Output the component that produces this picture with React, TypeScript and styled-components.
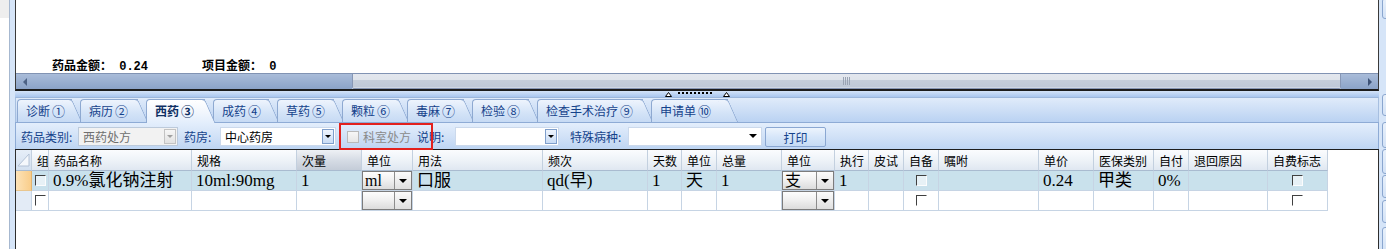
import React from "react";
import styled, { createGlobalStyle } from "styled-components";

const GlobalStyle = createGlobalStyle`
  html, body { margin: 0; padding: 0; background: #ffffff; }
  body {
    font-family: "Noto Sans CJK SC", "Liberation Sans", sans-serif;
    font-size: 12px;
    color: #000;
  }
  *, *::before, *::after { box-sizing: border-box; }
`;

const Page = styled.div`
  display: flex;
  width: 1386px;
  height: 249px;
  overflow: hidden;
`;

const Gutter = styled.div`
  flex: none;
  width: 10px;
  border-right: 1px solid #a6b8d0;
  background: #fff;
`;

const GutterBlock = styled.div`
  height: 18px;
  background: #eeeeee;
`;

const Frame = styled.div`
  flex: 1;
  min-width: 0;
  display: flex;
  background: #d6e5f8;
  padding-left: 5px;
`;

const Main = styled.div`
  flex: none;
  width: 1364px;
  display: flex;
  flex-direction: column;
`;

const SideBar = styled.div`
  flex: 1;
  overflow: hidden;
  padding-left: 3px;
  display: flex;
  flex-direction: column;
`;

const SideButton = styled.div<{ $h: number; $mt: number }>`
  flex: none;
  width: 14px;
  height: ${(p) => p.$h}px;
  margin-top: ${(p) => p.$mt}px;
  border: 1px solid #8aa6cf;
  border-radius: 3px;
  background: linear-gradient(#e9f1fb, #d3e2f6);
`;

/* ---------- top panel ---------- */

const TopPanel = styled.div`
  flex: none;
  height: 91px;
  display: flex;
  flex-direction: column;
  border-left: 1px solid #3a3a3a;
  border-right: 1px solid #3a3a3a;
  border-bottom: 2px solid #1c1c1c;
`;

const Summary = styled.div`
  flex: 1;
  background: #fff;
  display: flex;
  align-items: flex-end;
  padding-left: 36px;
  font-family: "Liberation Mono", "Noto Sans CJK SC", monospace;
  font-weight: 700;
  font-size: 12px;
  line-height: 12px;
`;

const SumItem = styled.div<{ $w?: number }>`
  width: ${(p) => (p.$w ? `${p.$w}px` : "auto")};
  white-space: pre;
`;

const HScroll = styled.div`
  flex: none;
  height: 16px;
  display: flex;
  border-top: 1px solid #8193b3;
`;

const ScrollTrack = styled.div<{ $w: number; $end?: boolean }>`
  flex: none;
  width: ${(p) => p.$w}px;
  display: flex;
  align-items: center;
  justify-content: ${(p) => (p.$end ? "flex-end" : "flex-start")};
  padding: 0 6px 0 7px;
  background: linear-gradient(#a9bcd9, #8ba3c8);
`;

const Arrow = styled.span<{ $dir: "left" | "right" }>`
  width: 0;
  height: 0;
  border-top: 4px solid transparent;
  border-bottom: 4px solid transparent;
  ${(p) =>
    p.$dir === "left"
      ? "border-right: 4px solid #4d6285;"
      : "border-left: 4px solid #3d5276;"}
`;

const Thumb = styled.div<{ $w: number }>`
  flex: none;
  width: ${(p) => p.$w}px;
  display: flex;
  align-items: center;
  justify-content: center;
  border: 1px solid #8797b5;
  border-top: none;
  border-radius: 0 0 2px 2px;
  background: linear-gradient(#e3e7ee 0%, #dfe4eb 42%, #c5cedb 46%, #bfc9d8 92%, #dde3ec 100%);
`;

const Grip = styled.span`
  width: 8px;
  height: 8px;
  background: repeating-linear-gradient(90deg, #9aa4b4 0 1px, transparent 1px 2px);
`;

const Splitter = styled.div`
  flex: none;
  height: 6px;
  padding-left: 650px;
  background: linear-gradient(#d3e3f8, #a9c6ee);
  svg { display: block; }
`;

/* ---------- tabs ---------- */

const TabPanel = styled.div`
  flex: 1;
  display: flex;
  flex-direction: column;
  min-height: 0;
`;

const TabStrip = styled.div`
  position: relative;
  z-index: 2;
  flex: none;
  height: 25px;
  display: flex;
  align-items: flex-end;
  padding-left: 1px;
  border-top: 1px solid #9cb7dc;
  border-left: 1px solid #a7bfe0;
  border-right: 1px solid #a7bfe0;
  background: linear-gradient(#e0ebfa, #bad2f2);
`;

const Tab = styled.div<{ $w: number; $active?: boolean }>`
  position: relative;
  z-index: ${(p) => (p.$active ? 3 : 1)};
  flex: none;
  width: ${(p) => p.$w}px;
  height: ${(p) => (p.$active ? 24 : 23)}px;
  margin-right: 8px;
  margin-bottom: ${(p) => (p.$active ? -1 : 0)}px;
  display: flex;
  align-items: center;
  padding: 0 0 ${(p) => (p.$active ? 3 : 2)}px 8px;
  border-top: 1px solid #8ea9d1;
  border-left: 1px solid #8ea9d1;
  border-top-left-radius: 4px;
  background: ${(p) =>
    p.$active
      ? "linear-gradient(#ffffff, #f1f6fd 55%, #e3eefc)"
      : "linear-gradient(#eef4fd, #d3e3f7 60%, #c6daf4)"};
  color: ${(p) => (p.$active ? "#0e2f63" : "#15428b")};
  font-weight: ${(p) => (p.$active ? 700 : 400)};
  white-space: nowrap;
  &::after {
    content: "";
    position: absolute;
    z-index: 0;
    top: -1px;
    right: 0;
    bottom: 0;
    width: 11px;
    border-top: 1px solid #8ea9d1;
    border-right: 1px solid #8ea9d1;
    border-top-right-radius: 4px;
    background: inherit;
    transform-origin: top left;
    transform: skewX(24deg);
  }
`;

const TabLabel = styled.span`
  position: relative;
  z-index: 1;
`;

const TabNum = styled.span`
  margin-left: 2px;
  font-size: 13px;
`;

/* ---------- toolbar ---------- */

const Toolbar = styled.div`
  position: relative;
  z-index: 1;
  flex: none;
  height: 27px;
  display: flex;
  align-items: center;
  padding-left: 5px;
  border: 1px solid #8eabd5;
  border-bottom: none;
  background: linear-gradient(#e3eefc, #d2e2f7 50%, #bed5f3);
`;

const Label = styled.div<{ $w: number; $ml?: number }>`
  flex: none;
  width: ${(p) => p.$w}px;
  margin-left: ${(p) => p.$ml ?? 0}px;
  color: #15428b;
  white-space: nowrap;
`;

const Combo = styled.div<{ $w: number; $disabled?: boolean }>`
  flex: none;
  width: ${(p) => p.$w}px;
  height: 19px;
  display: flex;
  align-items: center;
  padding: 0 1px 0 4px;
  border: 1px solid ${(p) => (p.$disabled ? "#bccadb" : "#cbd9ec")};
  background: ${(p) => (p.$disabled ? "#f2f2f2" : "#ffffff")};
  color: ${(p) => (p.$disabled ? "#6f6f6f" : "#000")};
`;

const ComboText = styled.span`
  flex: 1;
  white-space: nowrap;
  overflow: hidden;
`;

const ComboButton = styled.span<{ $kind: "gray" | "blue" | "plain" }>`
  flex: none;
  width: ${(p) => (p.$kind === "plain" ? 14 : 12)}px;
  height: 15px;
  display: flex;
  align-items: center;
  justify-content: center;
  border: 1px solid
    ${(p) => (p.$kind === "gray" ? "#c3c3c3" : p.$kind === "blue" ? "#7f9fcc" : "transparent")};
  background: ${(p) =>
    p.$kind === "gray"
      ? "linear-gradient(#f6f6f6, #e2e2e2)"
      : p.$kind === "blue"
      ? "linear-gradient(#eef4fd, #c9dcf5)"
      : "transparent"};
  &::before {
    content: "";
    width: 0;
    height: 0;
    border-left: ${(p) => (p.$kind === "plain" ? 4 : 3)}px solid transparent;
    border-right: ${(p) => (p.$kind === "plain" ? 4 : 3)}px solid transparent;
    border-top: ${(p) => (p.$kind === "plain" ? 4 : 3)}px solid
      ${(p) => (p.$kind === "gray" ? "#a0a0a0" : "#000")};
  }
`;

const CheckWrap = styled.label<{ $w: number; $ml: number }>`
  flex: none;
  width: ${(p) => p.$w}px;
  margin-left: ${(p) => p.$ml}px;
  display: flex;
  align-items: center;
  color: #8a8a8a;
  white-space: nowrap;
`;

const DisabledBox = styled.span`
  flex: none;
  width: 12px;
  height: 12px;
  margin: 2px 4px 0 0;
  border: 1px solid #b9b9b9;
  background: linear-gradient(#f6f6f6, #e6e6e6);
`;

const PrintButton = styled.button`
  flex: none;
  width: 61px;
  height: 20px;
  margin-left: 3px;
  margin-top: 2px;
  padding: 0;
  border: 1px solid #8aa7d2;
  border-radius: 2px;
  background: linear-gradient(#edf4fd, #d6e6f9 50%, #c6dbf5);
  color: #15428b;
  font-family: "Noto Sans CJK SC", sans-serif;
  font-size: 12px;
`;

const RedMark = styled.div`
  position: absolute;
  left: 323px;
  top: 0;
  width: 94px;
  height: 27px;
  border: 2px solid #e3211d;
  pointer-events: none;
`;

/* ---------- grid ---------- */

const GridPanel = styled.div`
  flex: 1;
  background: #fff;
  border-top: 1px solid #1e1e1e;
  border-left: 1px solid #2e2e2e;
  border-right: 1px solid #2e2e2e;
`;

const GridTable = styled.div<{ $cols: string }>`
  display: grid;
  grid-template-columns: ${(p) => p.$cols};
  grid-auto-rows: 20px;
  grid-template-rows: 21px;
`;

const HeadCell = styled.div<{ $dark?: boolean }>`
  display: flex;
  align-items: center;
  padding-left: 5px;
  border-right: 1px solid #c3d0df;
  border-bottom: 1px solid #a9bbd0;
  background: ${(p) =>
    p.$dark ? "linear-gradient(#eef1f5, #d6dce5 50%, #c4ccd8)" : "linear-gradient(#fbfcfe, #eef3f8 50%, #dfe7f1)"};
  white-space: nowrap;
  overflow: hidden;
`;

const CornerCell = styled.div`
  border-right: 1px solid #c3d0df;
  border-bottom: 1px solid #a9bbd0;
  background: linear-gradient(#e6eef8, #d3e0f0);
  svg { display: block; margin: 2px 0 0 1px; }
`;

const RowHead = styled.div<{ $sel?: boolean }>`
  border-right: 1px solid ${(p) => (p.$sel ? "#e4b56e" : "#c6d4e4")};
  border-bottom: 1px solid ${(p) => (p.$sel ? "#e9c68f" : "#c6d4e4")};
  background: ${(p) => (p.$sel ? "linear-gradient(90deg, #fde3b8, #f9cd8a)" : "#e3ebf6")};
`;

const Cell = styled.div<{ $sel?: boolean; $center?: boolean; $flush?: boolean }>`
  display: flex;
  align-items: center;
  justify-content: ${(p) => (p.$center ? "center" : "flex-start")};
  padding-left: ${(p) => (p.$center || p.$flush ? 0 : 4)}px;
  border-right: 1px solid #c6d4e4;
  border-bottom: 1px solid #c6d4e4;
  background: ${(p) => (p.$sel ? "#c9e1ec" : "#ffffff")};
  font-family: "Liberation Serif", "Noto Sans CJK SC", serif;
  font-size: 17px;
  line-height: 19px;
  white-space: nowrap;
  overflow: hidden;
`;

const CellCheck = styled.span`
  width: 11px;
  height: 11px;
  border-top: 1px solid #404040;
  border-left: 1px solid #404040;
  border-right: 1px solid rgba(255, 255, 255, 0.85);
  border-bottom: 1px solid rgba(255, 255, 255, 0.85);
  background: rgba(255, 255, 255, 0.55);
`;

const CellCombo = styled.div`
  width: 100%;
  height: 100%;
  display: flex;
  align-items: stretch;
  border: 1px solid #7c7c7c;
  background: linear-gradient(#fdfdfd, #f1f1f1 45%, #dcdcdc);
`;

const CellComboText = styled.span`
  flex: 1;
  display: flex;
  align-items: center;
  padding-left: 2px;
  font-size: 16px;
  line-height: 16px;
  white-space: nowrap;
`;

const CellComboButton = styled.span`
  flex: none;
  width: 17px;
  display: flex;
  align-items: center;
  justify-content: center;
  border-left: 1px solid #8c8c8c;
  background: linear-gradient(#fbfbfb, #e0e0e0);
  &::before {
    content: "";
    border-left: 4px solid transparent;
    border-right: 4px solid transparent;
    border-top: 4px solid #000;
  }
`;

type Col = { t: string; w: number; dark?: boolean };

const columns: Col[] = [
  { t: "", w: 16 },
  { t: "组", w: 17 },
  { t: "药品名称", w: 143 },
  { t: "规格", w: 105 },
  { t: "次量", w: 65, dark: true },
  { t: "单位", w: 51 },
  { t: "用法", w: 130 },
  { t: "频次", w: 105 },
  { t: "天数", w: 34 },
  { t: "单位", w: 35 },
  { t: "总量", w: 65 },
  { t: "单位", w: 53 },
  { t: "执行", w: 34 },
  { t: "皮试", w: 35 },
  { t: "自备", w: 35 },
  { t: "嘱咐", w: 100 },
  { t: "单价", w: 55 },
  { t: "医保类别", w: 60 },
  { t: "自付", w: 35 },
  { t: "退回原因", w: 79 },
  { t: "自费标志", w: 60 },
];

type CellValue = string | { check: true } | { combo: string };

const CHK = { check: true } as const;

const rows: { sel: boolean; cells: CellValue[] }[] = [
  {
    sel: true,
    cells: [
      CHK, "0.9%氯化钠注射", "10ml:90mg", "1", { combo: "ml" }, "口服", "qd(早)", "1", "天", "1",
      { combo: "支" }, "1", "", CHK, "", "0.24", "甲类", "0%", "", CHK,
    ],
  },
  {
    sel: false,
    cells: [
      CHK, "", "", "", { combo: "" }, "", "", "", "", "", { combo: "" }, "", "", CHK, "", "", "", "", "", CHK,
    ],
  },
];

const tabs = [
  { name: "诊断", num: "①", w: 55 },
  { name: "病历", num: "②", w: 58 },
  { name: "西药", num: "③", w: 59, active: true },
  { name: "成药", num: "④", w: 56 },
  { name: "草药", num: "⑤", w: 57 },
  { name: "颗粒", num: "⑥", w: 57 },
  { name: "毒麻", num: "⑦", w: 57 },
  { name: "检验", num: "⑧", w: 57 },
  { name: "检查手术治疗", num: "⑨", w: 106 },
  { name: "申请单", num: "⑩", w: 77 },
];

const sideButtons = [
  { mt: -2, h: 21 },
  { mt: 75, h: 22 },
  { mt: 6, h: 26 },
  { mt: 1, h: 25 },
  { mt: 1, h: 23 },
  { mt: 2, h: 23 },
  { mt: 4, h: 26 },
];

const SplitterGrip = () => (
  <svg width="68" height="6" viewBox="0 0 68 6">
    <polygon points="0.5,5.5 3.5,1.5 6.5,5.5" fill="#ffffff" stroke="#000" strokeWidth="1" />
    {Array.from({ length: 9 }).map((_, i) => (
      <rect key={i} x={13 + i * 4} y={1} width={2} height={2} fill="#000" />
    ))}
    <polygon points="58.5,5.5 61.5,1.5 64.5,5.5" fill="#ffffff" stroke="#000" strokeWidth="1" />
  </svg>
);

const renderCell = (v: CellValue, sel: boolean, key: number) => {
  if (typeof v === "string") {
    return (
      <Cell key={key} $sel={sel}>
        {v}
      </Cell>
    );
  }
  if ("check" in v) {
    return (
      <Cell key={key} $sel={sel} $center>
        <CellCheck />
      </Cell>
    );
  }
  return (
    <Cell key={key} $sel={sel} $flush>
      <CellCombo>
        <CellComboText>{v.combo}</CellComboText>
        <CellComboButton />
      </CellCombo>
    </Cell>
  );
};

const App = () => {
  const cols = columns.map((c) => `${c.w}px`).join(" ");
  return (
    <>
      <GlobalStyle />
      <Page>
        <Gutter>
          <GutterBlock />
        </Gutter>
        <Frame>
          <Main>
            <TopPanel>
              <Summary>
                <SumItem $w={150}>药品金额： 0.24</SumItem>
                <SumItem>项目金额： 0</SumItem>
              </Summary>
              <HScroll>
                <ScrollTrack $w={336}>
                  <Arrow $dir="left" />
                </ScrollTrack>
                <Thumb $w={989}>
                  <Grip />
                </Thumb>
                <ScrollTrack $w={37} $end>
                  <Arrow $dir="right" />
                </ScrollTrack>
              </HScroll>
            </TopPanel>
            <Splitter>
              <SplitterGrip />
            </Splitter>
            <TabPanel>
              <TabStrip>
                {tabs.map((t) => (
                  <Tab key={t.name} $w={t.w} $active={t.active}>
                    <TabLabel>
                      {t.name}
                      <TabNum>{t.num}</TabNum>
                    </TabLabel>
                  </Tab>
                ))}
              </TabStrip>
              <Toolbar>
                <Label $w={57}>药品类别:</Label>
                <Combo $w={100} $disabled>
                  <ComboText>西药处方</ComboText>
                  <ComboButton $kind="gray" />
                </Combo>
                <Label $w={36} $ml={6}>药房:</Label>
                <Combo $w={116}>
                  <ComboText>中心药房</ComboText>
                  <ComboButton $kind="blue" />
                </Combo>
                <CheckWrap $w={70} $ml={11}>
                  <DisabledBox />
                  科室处方
                </CheckWrap>
                <Label $w={38}>说明:</Label>
                <Combo $w={104}>
                  <ComboText />
                  <ComboButton $kind="blue" />
                </Combo>
                <Label $w={58} $ml={11}>特殊病种:</Label>
                <Combo $w={134}>
                  <ComboText />
                  <ComboButton $kind="plain" />
                </Combo>
                <PrintButton>打印</PrintButton>
                <RedMark />
              </Toolbar>
              <GridPanel>
                <GridTable $cols={cols}>
                  {columns.map((c, i) =>
                    i === 0 ? (
                      <CornerCell key={i}>
                        <svg width="13" height="15" viewBox="0 0 13 15">
                          <polygon points="1,14 12,2 12,14" fill="#f5f8fc" stroke="#b3c2d6" strokeWidth="1" />
                        </svg>
                      </CornerCell>
                    ) : (
                      <HeadCell key={i} $dark={c.dark}>
                        {c.t}
                      </HeadCell>
                    )
                  )}
                  {rows.map((r, ri) => (
                    <React.Fragment key={ri}>
                      <RowHead $sel={r.sel} />
                      {r.cells.map((v, ci) => renderCell(v, r.sel, ci))}
                    </React.Fragment>
                  ))}
                </GridTable>
              </GridPanel>
            </TabPanel>
          </Main>
          <SideBar>
            {sideButtons.map((b, i) => (
              <SideButton key={i} $mt={b.mt} $h={b.h} />
            ))}
          </SideBar>
        </Frame>
      </Page>
    </>
  );
};

export default App;
